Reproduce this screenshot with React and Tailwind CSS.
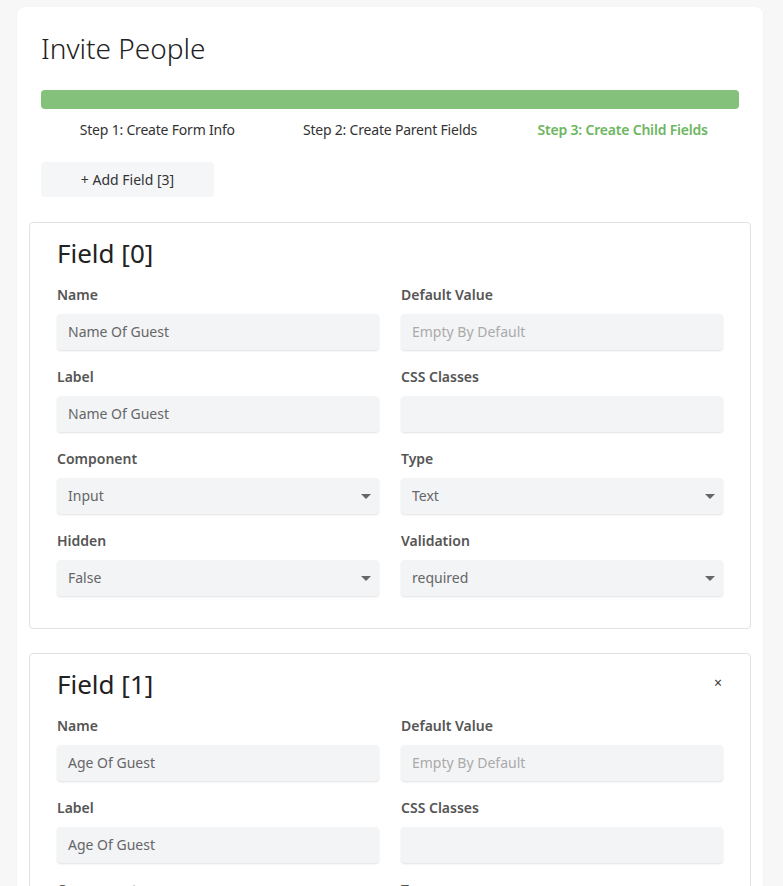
import React from "react";

const fields = [
  {
    name: "Name Of Guest",
    label: "Name Of Guest",
    component: "Input",
    type: "Text",
    hidden: "False",
    validation: "required",
  },
  {
    name: "Age Of Guest",
    label: "Age Of Guest",
    component: "Input",
    type: "Number",
    hidden: "False",
    validation: "required",
  },
  {
    name: "Email",
    label: "Email",
    component: "Input",
    type: "Text",
    hidden: "False",
    validation: "required",
  },
];

function TextBox({ value, placeholder }) {
  return (
    <div className="h-[36px] rounded bg-[#f3f4f6] px-[11px] flex items-center text-sm shadow-[0_1px_2px_rgba(0,0,0,0.12)]">
      {value ? (
        <span className="text-[#666]">{value}</span>
      ) : (
        <span className="text-[#aaa]">{placeholder}</span>
      )}
    </div>
  );
}

function SelectBox({ value }) {
  return (
    <div className="h-[36px] rounded bg-[#f3f4f6] pl-[11px] pr-[7px] flex items-center justify-between text-sm shadow-[0_1px_2px_rgba(0,0,0,0.12)]">
      <span className="text-[#666]">{value}</span>
      <svg width="10" height="5" viewBox="0 0 10 5" className="mr-[1px]">
        <path d="M0 0 L10 0 L5 5 Z" fill="#666" />
      </svg>
    </div>
  );
}

function Group({ label, children }) {
  return (
    <div className="flex flex-col">
      <div className="text-sm font-semibold text-[#555] leading-5">{label}</div>
      <div className="mt-[9px]">{children}</div>
    </div>
  );
}

function FieldCard({ index, field }) {
  return (
    <div className="border border-[#e2e2e2] rounded bg-white px-[27px] pt-[14px] pb-[32px]">
      <div className="flex items-center justify-between">
        <h4 className="text-[26px] leading-8 text-[#222]">Field [{index}]</h4>
        {index > 0 && <span className="text-sm text-[#333] mr-[1px] -mt-[2px]">×</span>}
      </div>
      <div className="grid grid-cols-2 gap-x-[22px] gap-y-[17px] mt-[16px]">
        <Group label="Name">
          <TextBox value={field.name} />
        </Group>
        <Group label="Default Value">
          <TextBox placeholder="Empty By Default" />
        </Group>
        <Group label="Label">
          <TextBox value={field.label} />
        </Group>
        <Group label="CSS Classes">
          <TextBox />
        </Group>
        <Group label="Component">
          <SelectBox value={field.component} />
        </Group>
        <Group label="Type">
          <SelectBox value={field.type} />
        </Group>
        <Group label="Hidden">
          <SelectBox value={field.hidden} />
        </Group>
        <Group label="Validation">
          <SelectBox value={field.validation} />
        </Group>
      </div>
    </div>
  );
}

export default function App() {
  const steps = [
    { label: "Step 1: Create Form Info", active: false },
    { label: "Step 2: Create Parent Fields", active: false },
    { label: "Step 3: Create Child Fields", active: true },
  ];

  return (
    <div
      className="min-h-screen bg-[#f7f7f7] pt-[7px] pl-[17px] pr-[20px] pb-8"
      style={{ fontFamily: '"Noto Sans", "Open Sans", sans-serif' }}
    >
      <div className="bg-white rounded-lg shadow-[0_1px_3px_rgba(0,0,0,0.04)] p-3 pt-6">
        {/* Header */}
        <div className="px-3">
          <h1 className="text-[28px] leading-[34px] font-light text-[#222]">Invite People</h1>
          <div className="mt-[25px] h-[19px] rounded bg-[#84c17b]" />
          <div className="grid grid-cols-3 mt-[11px]">
            {steps.map((s, i) => (
              <div
                key={i}
                className={`text-center text-sm leading-5 tracking-[-0.2px] ${
                  s.active ? "text-[#6cb65f] font-semibold" : "text-[#333]"
                }`}
              >
                {s.label}
              </div>
            ))}
          </div>
          <button className="mt-[22px] w-[173px] h-[35px] rounded bg-[#f5f6f8] text-sm text-[#333]">
            + Add Field [3]
          </button>
        </div>

        {/* Fields */}
        <div className="flex flex-col gap-6 mt-[25px]">
          {fields.map((f, i) => (
            <FieldCard key={i} index={i} field={f} />
          ))}
        </div>
      </div>
    </div>
  );
}
